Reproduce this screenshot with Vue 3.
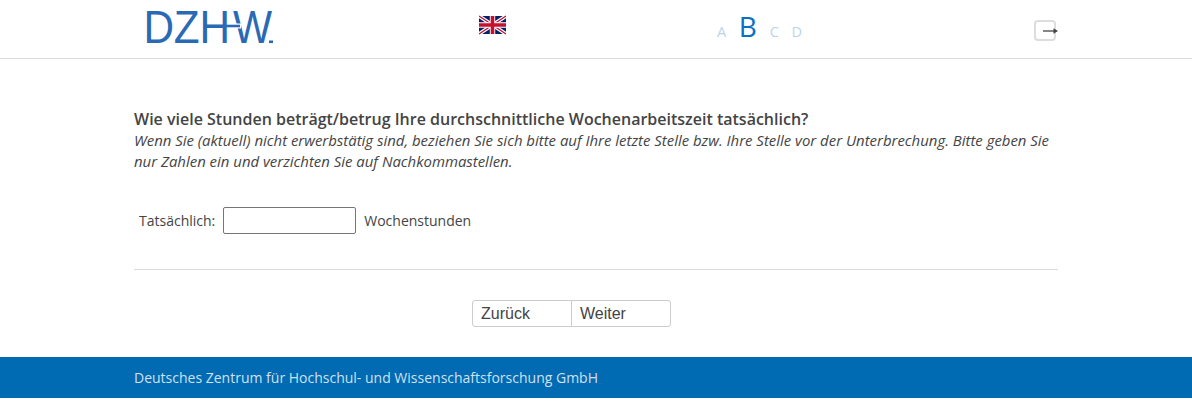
<template>
  <div class="page">
    <header class="topbar">
      <div class="topbar-inner">
        <svg class="logo" width="134" height="58" viewBox="0 0 134 58">
          <text class="logo-text" transform="translate(.6 43) scale(.92 1)" x="0 32.7 60.9">DZH</text>
          <text class="logo-text" transform="translate(90 43) scale(.9 1)">W</text>
          <line x1="88" y1="26" x2="98" y2="26" stroke="#fff" stroke-width="5" />
          <line x1="80" y1="26" x2="97" y2="26" stroke="#2a6ab5" stroke-width="2.6" />
          <rect x="126" y="40.5" width="4" height="2.6" fill="#2a6ab5" />
        </svg>
        <svg class="flag" width="27" height="20" viewBox="0 0 60 40">
          <rect width="60" height="40" fill="#012169" />
          <path d="M0 0L60 40M60 0L0 40" stroke="#fff" stroke-width="8" />
          <path d="M0 0L60 40M60 0L0 40" stroke="#c8102e" stroke-width="3" />
          <path d="M30 0V40M0 20H60" stroke="#fff" stroke-width="12" />
          <path d="M30 0V40M0 20H60" stroke="#c8102e" stroke-width="8" />
        </svg>
        <nav class="sizes">
          <a v-for="s in sizes" :key="s" class="size" :class="{ active: s === 'B' }">{{ s }}</a>
        </nav>
        <button class="logout" aria-label="Abmelden">
          <svg width="15" height="8" viewBox="0 0 15 8">
            <path d="M0 4H11" stroke="#444" stroke-width="1.3" />
            <path d="M10.5 1.2L15 4L10.5 6.8Z" fill="#444" />
          </svg>
        </button>
      </div>
    </header>

    <main class="content">
      <h1 class="question">Wie viele Stunden beträgt/betrug Ihre durchschnittliche Wochenarbeitszeit tatsächlich?</h1>
      <p class="hint">Wenn Sie (aktuell) nicht erwerbstätig sind, beziehen Sie sich bitte auf Ihre letzte Stelle bzw. Ihre Stelle vor der Unterbrechung. Bitte geben Sie nur Zahlen ein und verzichten Sie auf Nachkommastellen.</p>

      <div class="answer">
        <label for="hours">Tatsächlich:</label>
        <input id="hours" v-model="hours" type="text" />
        <span>Wochenstunden</span>
      </div>

      <div class="actions">
        <button class="nav-btn">Zurück</button>
        <button class="nav-btn">Weiter</button>
      </div>
    </main>

    <footer class="footer">
      <div class="footer-inner">Deutsches Zentrum für Hochschul- und Wissenschaftsforschung GmbH</div>
    </footer>
  </div>
</template>

<script setup>
import { ref } from 'vue';

const sizes = ['A', 'B', 'C', 'D'];
const hours = ref('');
</script>

<style scoped>
.page {
  font-family: "Open Sans", sans-serif;
  color: #444;
  background: #fff;
}

.topbar {
  height: 58px;
  border-bottom: 1px solid #ddd;
}

.topbar-inner {
  width: 924px;
  height: 58px;
  margin: 0 auto;
  display: grid;
  grid-template-columns: 345px 238px 1fr auto;
  align-items: start;
}

.logo {
  display: block;
  margin-left: 9px;
}

.logo-text {
  font-family: "Liberation Sans", sans-serif;
  font-size: 46px;
  fill: #2a6ab5;
}

.flag {
  display: block;
  margin-top: 15px;
}

.sizes {
  display: flex;
  align-items: baseline;
  margin-top: 9px;
  line-height: 34px;
}

.size {
  font-size: 14.5px;
  color: #b9d4ec;
  margin-right: 12.5px;
}

.size.active {
  font-size: 28px;
  font-weight: 500;
  color: #0a70c4;
  margin-right: 13px;
}

.logout {
  width: 22px;
  height: 21px;
  margin: 20px 2px 0 0;
  padding: 0 0 0 7px;
  border: 2px solid #ddd;
  border-radius: 4px;
  background: #fff;
  display: flex;
  align-items: center;
}

.logout svg {
  flex: none;
}

.content {
  width: 924px;
  margin: 0 auto;
  padding-top: 49px;
}

.question {
  margin: 0;
  font-size: 16px;
  line-height: 22px;
  font-weight: 600;
}

.hint {
  margin: 0;
  font-size: 14.93px;
  line-height: 21px;
  font-style: italic;
}

.answer {
  display: flex;
  align-items: center;
  gap: 8px;
  margin-top: 35px;
  padding: 0 0 35px 5px;
  border-bottom: 1px solid #ddd;
  font-size: 14px;
}

.answer input {
  width: 133px;
  height: 27px;
  box-sizing: border-box;
  border: 1px solid #767676;
  border-radius: 2px;
  padding: 0 4px;
  outline: none;
}

.actions {
  display: flex;
  margin: 30px 0;
  padding-left: 338px;
}

.nav-btn {
  width: 100px;
  height: 27px;
  padding: 0 8px;
  border: 1px solid #ccc;
  background: #fff;
  font-family: "Liberation Sans", sans-serif;
  font-size: 16px;
  color: #444;
  text-align: left;
}

.nav-btn:first-child {
  border-radius: 3px 0 0 3px;
}

.nav-btn:last-child {
  margin-left: -1px;
  border-radius: 0 3px 3px 0;
}

.footer {
  height: 41px;
  background: #006ab2;
}

.footer-inner {
  width: 924px;
  margin: 0 auto;
  font-size: 14px;
  line-height: 41px;
  color: #cfe1f0;
}
</style>
